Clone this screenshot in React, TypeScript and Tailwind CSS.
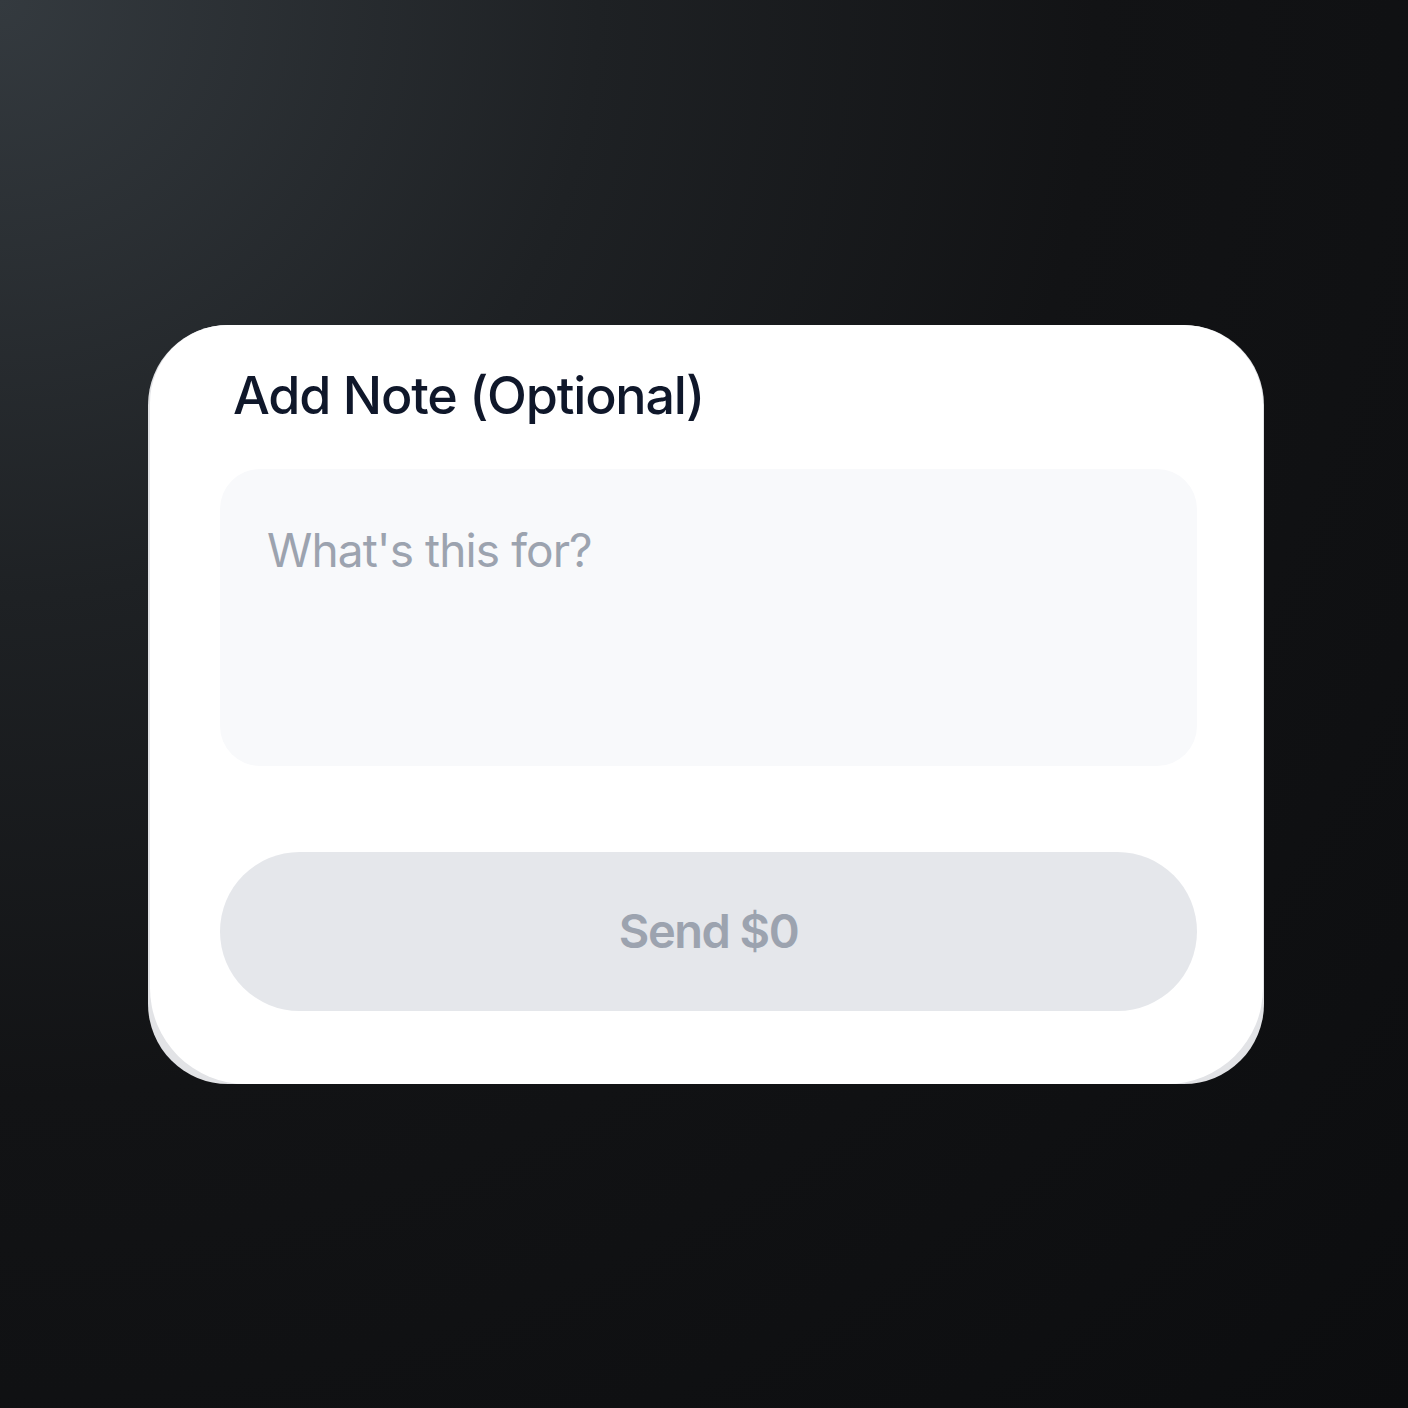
export default function App() {
  return (
    <div
      className="w-full h-[1408px] flex items-center justify-center pl-[4px] bg-[radial-gradient(circle_at_0_0,#343a3f_0%,#1e2124_30%,#121315_55%,#0c0d0f_100%)]"
      style={{ fontFamily: "Inter, 'Noto Sans', sans-serif" }}
    >
      <div className="w-[1116px] rounded-[80px] bg-[#e2e3e6]">
        <div className="ml-[2px] mr-[1px] bg-white rounded-tl-[78px] rounded-tr-[80px] rounded-b-[96px] pl-[70px] pr-[66px] pt-[38px] pb-[73px] flex flex-col">
          <h2 className="pl-[13px] text-[52px] leading-[66px] font-medium text-[#0f172a] tracking-[-1.2px]">
            Add Note (Optional)
          </h2>
          <textarea
            className="mt-[40px] h-[297px] w-full resize-none rounded-[40px] bg-[#f8f9fb] pl-[47px] pt-[53px] text-[46px] leading-[56px] tracking-[-0.9px] text-[#111827] placeholder:text-[#9ca3af] outline-none"
            placeholder="What's this for?"
          />
          <button className="mt-[86px] h-[159px] w-full rounded-full bg-[#e5e7eb] text-[47px] font-semibold tracking-[-1.5px] text-[#9ca3af]">
            Send $0
          </button>
        </div>
      </div>
    </div>
  );
}
